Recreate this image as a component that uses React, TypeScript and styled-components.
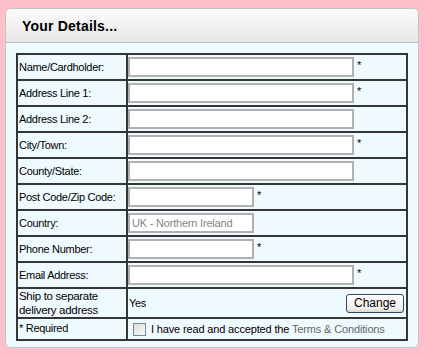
import React from 'react';
import styled, { createGlobalStyle } from 'styled-components';

const GlobalStyle = createGlobalStyle`
  html, body {
    margin: 0;
    padding: 0;
    background: #ffc0cb;
  }
  body {
    font-family: "Liberation Sans", Arial, sans-serif;
  }
`;

interface Field {
  label: string;
  required?: boolean;
  short?: boolean;
  value?: string;
}

const fields: Field[] = [
  { label: 'Name/Cardholder:', required: true },
  { label: 'Address Line 1:', required: true },
  { label: 'Address Line 2:' },
  { label: 'City/Town:', required: true },
  { label: 'County/State:' },
  { label: 'Post Code/Zip Code:', required: true, short: true },
  { label: 'Country:', short: true, value: 'UK - Northern Ireland' },
  { label: 'Phone Number:', required: true, short: true },
  { label: 'Email Address:', required: true },
];

const App = () => {
  return (
    <>
      <GlobalStyle />
      <Page>
        <Panel>
          <PanelHeader>Your Details...</PanelHeader>
          <PanelBody>
            <FormTable>
              <tbody>
                {fields.map((f) => (
                  <Row key={f.label}>
                    <LabelCell>{f.label}</LabelCell>
                    <ValueCell>
                      <TextInput
                        $short={f.short}
                        defaultValue={f.value}
                        readOnly={!!f.value}
                        $muted={!!f.value}
                      />
                      {f.required && <Star>*</Star>}
                    </ValueCell>
                  </Row>
                ))}
                <Row $height={28}>
                  <LabelCell $lines>Ship to separate<br />delivery address</LabelCell>
                  <ValueCell>
                    <ShipLine>
                      <span>Yes</span>
                      <ChangeButton type="button">Change</ChangeButton>
                    </ShipLine>
                  </ValueCell>
                </Row>
                <Row $height={18} $last>
                  <LabelCell $top>* Required</LabelCell>
                  <ValueCell>
                    <TermsLine>
                      <Check type="checkbox" />
                      <span>I have read and accepted the <TermsLink>Terms &amp; Conditions</TermsLink></span>
                    </TermsLine>
                  </ValueCell>
                </Row>
              </tbody>
            </FormTable>
          </PanelBody>
        </Panel>
      </Page>
    </>
  );
};

const Page = styled.div`
  padding: 8px 5px 0 5px;
`;

const Panel = styled.div`
  width: 412px;
  height: 338px;
  border: 1px solid #c4c4c4;
  border-radius: 6px;
  background: #effaff;
  overflow: hidden;
`;

const PanelHeader = styled.div`
  height: 34px;
  box-sizing: border-box;
  padding-left: 16px;
  display: flex;
  align-items: center;
  background: linear-gradient(#fbfbfb, #e7e7e7);
  border-bottom: 1px solid #bdbdbd;
  font-size: 14px;
  font-weight: bold;
  letter-spacing: 0.2px;
  color: #000;
`;

const PanelBody = styled.div`
  padding: 10px 0 0 10px;
`;

const FormTable = styled.table`
  border-collapse: separate;
  border-spacing: 0;
  border: 2px solid #353535;
  width: 392px;
  font-size: 11px;
  letter-spacing: -0.3px;
  color: #000;
`;

const Row = styled.tr<{ $height?: number; $last?: boolean }>`
  & > td {
    height: ${(p) => p.$height ?? 24}px;
    border-bottom: ${(p) => (p.$last ? 'none' : '2px solid #353535')};
  }
`;

const LabelCell = styled.td<{ $lines?: boolean; $top?: boolean }>`
  width: 107px;
  padding: ${(p) => (p.$top ? '2px 0 0 1px' : '0 0 0 1px')};
  border-right: 2px solid #353535;
  vertical-align: ${(p) => (p.$top ? 'top' : 'middle')};
  line-height: ${(p) => (p.$lines ? '14px' : '14px')};
  font-size: ${(p) => (p.$lines ? '11.5px' : '11px')};
  white-space: nowrap;
`;

const ValueCell = styled.td`
  padding: 0;
  vertical-align: middle;
  white-space: nowrap;
`;

const TextInput = styled.input<{ $short?: boolean; $muted?: boolean }>`
  box-sizing: border-box;
  width: ${(p) => (p.$short ? 126 : 226)}px;
  height: 20px;
  margin: 0;
  padding: 0 0 0 2px;
  border: 2px solid #b0b0b0;
  background: #fff;
  font-family: "Liberation Sans", Arial, sans-serif;
  font-size: 11px;
  letter-spacing: -0.2px;
  color: ${(p) => (p.$muted ? '#858585' : '#000')};
  vertical-align: middle;
  outline: none;
`;

const Star = styled.span`
  display: inline-block;
  margin-left: 3px;
  vertical-align: middle;
  position: relative;
  top: -2px;
  font-size: 11px;
`;

const ShipLine = styled.div`
  display: flex;
  align-items: center;
  justify-content: space-between;
  padding: 0 2px 0 1px;
`;

const ChangeButton = styled.button`
  height: 19px;
  width: 58px;
  padding: 0;
  border: 1px solid #2b4a66;
  border-radius: 3px;
  background: linear-gradient(#ffffff, #eeeeea 80%, #d8d8d0);
  font-family: "Liberation Sans", Arial, sans-serif;
  font-size: 12px;
  color: #000;
`;

const TermsLine = styled.div`
  display: flex;
  align-items: center;
  gap: 5px;
  padding-left: 5px;
  letter-spacing: -0.15px;
`;

const Check = styled.input`
  appearance: none;
  margin: 0;
  width: 13px;
  height: 13px;
  border: 1px solid #6f8aa6;
  background: linear-gradient(135deg, #dcdcd6, #fbfbf9);
`;

const TermsLink = styled.span`
  color: #666;
`;

export default App;
